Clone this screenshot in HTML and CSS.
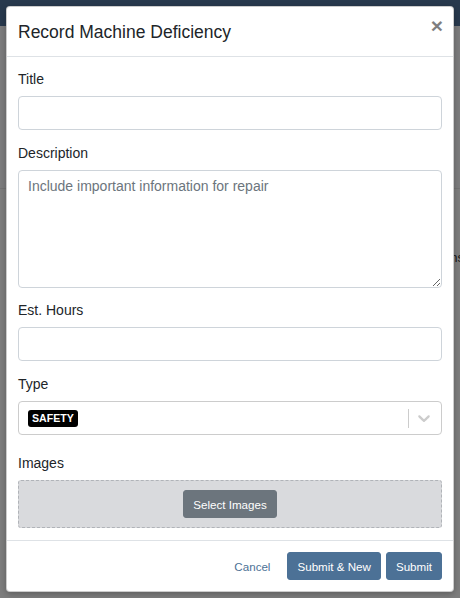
FILE: index.html
```html
<!DOCTYPE html>
<html>
<head>
<meta charset="utf-8">
<link rel="stylesheet" href="styles.css">
</head>
<body>
<div class="page">
  <div class="navbar"></div>
  <div class="content">
    <div class="panel"></div>
    <div class="side-text">ns</div>
  </div>
</div>
<div class="backdrop"></div>
<div class="modal">
  <div class="modal-header">
    <h5 class="modal-title">Record Machine Deficiency</h5>
    <button class="close" type="button">×</button>
  </div>
  <div class="modal-body">
    <div class="form-group">
      <label class="label">Title</label>
      <input class="form-control" type="text">
    </div>
    <div class="form-group group-desc">
      <label class="label">Description</label>
      <textarea class="form-control textarea" placeholder="Include important information for repair"></textarea>
    </div>
    <div class="form-group">
      <label class="label">Est. Hours</label>
      <input class="form-control" type="text">
    </div>
    <div class="form-group group-select">
      <label class="label">Type</label>
      <div class="select">
        <div class="select-value"><span class="badge">SAFETY</span></div>
        <div class="select-indicators">
          <span class="separator"></span>
          <span class="indicator">
            <svg width="20" height="20" viewBox="0 0 20 20"><path fill="#cccccc" d="M4.516 7.548c0.436-0.446 1.043-0.481 1.576 0l3.908 3.747 3.908-3.747c0.533-0.481 1.141-0.446 1.574 0 0.436 0.445 0.408 1.197 0 1.615-0.406 0.418-4.695 4.502-4.695 4.502-0.217 0.223-0.502 0.335-0.787 0.335s-0.57-0.112-0.789-0.335c0 0-4.287-4.084-4.695-4.502s-0.436-1.170 0-1.615z"/></svg>
          </span>
        </div>
      </div>
    </div>
    <div class="form-group last">
      <label class="label">Images</label>
      <div class="dropzone">
        <button class="btn btn-secondary" type="button">Select Images</button>
      </div>
    </div>
  </div>
  <div class="modal-footer">
    <button class="btn btn-link" type="button">Cancel</button>
    <button class="btn btn-primary" type="button">Submit &amp; New</button>
    <button class="btn btn-primary" type="button">Submit</button>
  </div>
</div>
</body>
</html>
```

FILE: styles.css
```css
* { box-sizing: border-box; }
html, body { margin: 0; padding: 0; }
body {
  width: 460px;
  height: 598px;
  overflow: hidden;
  font-family: "Liberation Sans", Arial, sans-serif;
  font-size: 14px;
  line-height: 1.5;
  color: #212529;
  background: #ffffff;
  position: relative;
}
.page { width: 460px; height: 598px; display: flex; flex-direction: column; }
.navbar { height: 28px; background: #50739a; }
.content { flex: 1; position: relative; background: #f8f9fa; }
.panel {
  margin-top: 162px;
  height: 410px;
  border-top: 1px solid #e6e6e6;
  background: #fafafa;
}
.side-text {
  position: absolute;
  right: -4px;
  top: 222px;
  font-size: 13px;
  color: #333;
}
.backdrop {
  position: absolute;
  inset: 0;
  background: rgba(0, 0, 0, 0.5);
}
.modal {
  position: absolute;
  left: 6px;
  top: 6px;
  width: 448px;
  height: 586px;
  background: #fff;
  border: 1px solid rgba(0, 0, 0, 0.2);
  border-radius: 4px;
  display: flex;
  flex-direction: column;
  box-shadow: 0 2px 6px rgba(0,0,0,0.25);
}
.modal-header {
  display: flex;
  align-items: flex-start;
  justify-content: space-between;
  padding: 11.5px 11px 11.5px 11px;
  border-bottom: 1px solid #dee2e6;
  height: 50px;
}
.modal-title {
  margin: 0;
  font-size: 17.5px;
  font-weight: 400;
  line-height: 1.5;
}
.close {
  border: 0;
  background: transparent;
  padding: 0;
  margin: -4px -1px 0 0;
  font-family: "Liberation Sans", Arial, sans-serif;
  font-size: 21px;
  font-weight: 700;
  line-height: 1;
  color: #000;
  opacity: 0.5;
}
.modal-body {
  padding: 12px 11px 0 11px;
  flex: 1;
  display: flex;
  flex-direction: column;
}
.form-group { display: flex; flex-direction: column; margin-bottom: 13px; }
.form-group.group-desc { margin-bottom: 12px; }
.form-group.group-select { margin-bottom: 18px; }
.form-group.last { margin-bottom: 0; }
.label { display: block; margin-bottom: 6px; line-height: 21px; }
.form-control {
  display: block;
  width: 424px;
  height: 34px;
  padding: 5px 9px;
  font-family: "Liberation Sans", Arial, sans-serif;
  font-size: 14px;
  line-height: 1.5;
  color: #495057;
  background: #fff;
  border: 1px solid #ced4da;
  border-radius: 4px;
  margin: 0;
}
.textarea { height: 118px; resize: vertical; }
.textarea::placeholder { color: #6c757d; opacity: 1; }
.select {
  display: flex;
  align-items: center;
  width: 424px;
  height: 34px;
  border: 1px solid #cccccc;
  border-radius: 4px;
  background: #fff;
}
.select-value { flex: 1; padding: 0 9px; display: flex; align-items: center; }
.badge {
  display: inline-block;
  background: #000;
  color: #fff;
  font-size: 10.6px;
  font-weight: 700;
  line-height: 1;
  padding: 3px 4px 3px 4px;
  border-radius: 3px;
  margin-top: 1px;
}
.select-indicators { display: flex; align-items: stretch; align-self: stretch; }
.separator { width: 1px; background: #cccccc; margin: 7px 0 6px; }
.indicator { display: flex; align-items: center; padding: 0 7px 0 5px; }
.indicator svg { display: block; }
.dropzone {
  height: 48px;
  background: #d9dadd;
  border: 1px dashed #b0b3b8;
  border-radius: 3px;
  display: flex;
  align-items: center;
  justify-content: center;
}
.btn {
  font-family: "Liberation Sans", Arial, sans-serif;
  font-size: 11.6px;
  line-height: 17px;
  padding: 4.5px 9px 6.5px;
  border: 1px solid transparent;
  border-radius: 3px;
  cursor: pointer;
  height: 28px;
  white-space: nowrap;
}
.btn-secondary { background: #6c757d; color: #fff; border-color: #6c757d; }
.btn-primary { background: #4c7196; color: #fff; border-color: #4c7196; }
.btn-link { background: transparent; color: #4c7196; }
.modal-footer {
  display: flex;
  justify-content: flex-end;
  align-items: center;
  gap: 5px;
  padding: 11px 11px 11px 11px;
  border-top: 1px solid #dee2e6;
}
.modal-footer .btn-link { margin-right: 2px; }
```
